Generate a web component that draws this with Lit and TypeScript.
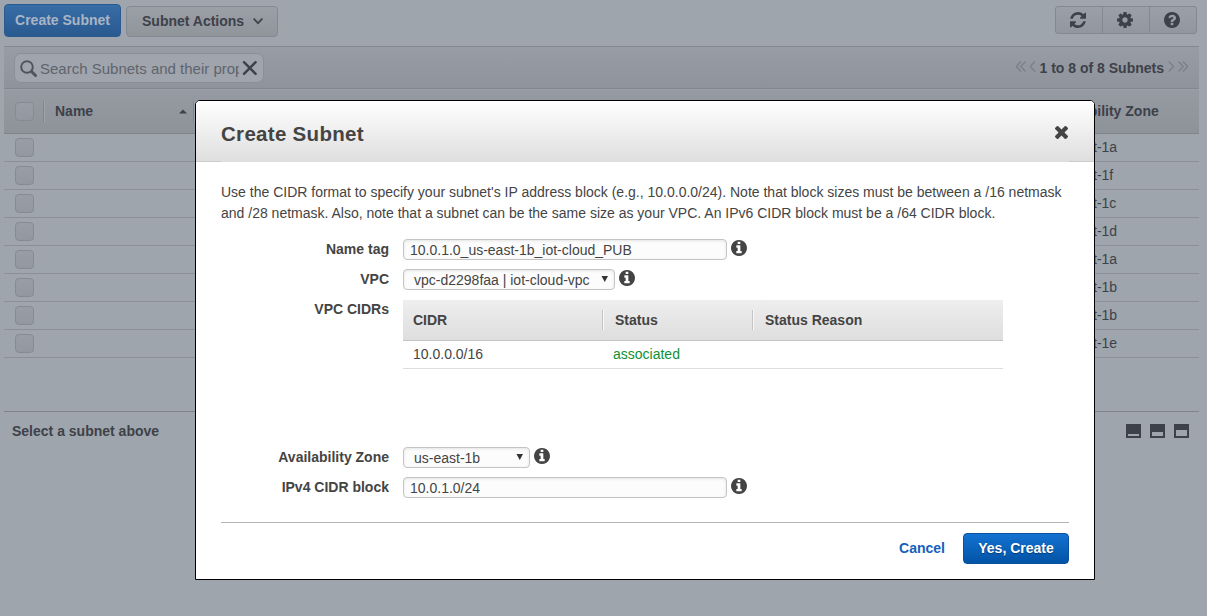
import { LitElement, html, css, svg } from "lit";
import { customElement } from "lit/decorators.js";

const ICONS: Record<string, { box: string; d: string }> = {
  refresh: {
    box: "128 128 1536 1536",
    d: "M1639 1056q0 5-1 7-64 268-268 434.5t-478 166.5q-146 0-282.5-55t-243.5-157l-129 129q-19 19-45 19t-45-19-19-45v-448q0-26 19-45t45-19h448q26 0 45 19t19 45-19 45l-137 137q71 66 161 102t187 36q134 0 250-65t186-179q11-17 53-117 8-23 30-23h192q13 0 22.5 9.5t9.5 22.5zm25-800v448q0 26-19 45t-45 19h-448q-26 0-45-19t-19-45 19-45l138-138q-148-137-349-137-134 0-250 65t-186 179q-11 17-53 117-8 23-30 23h-199q-13 0-22.5-9.5t-9.5-22.5v-7q65-268 270-434.5t480-166.5q146 0 284 55.5t245 156.5l130-129q19-19 45-19t45 19 19 45z",
  },
  cog: {
    box: "128 128 1536 1536",
    d: "M1152 896q0-106-75-181t-181-75-181 75-75 181 75 181 181 75 181-75 75-181zm512-109v222q0 12-8 23t-20 13l-185 28q-19 54-39 91 35 50 107 138 10 12 10 25t-9 23q-27 37-99 108t-94 71q-12 0-26-9l-138-108q-44 23-91 38-16 136-29 186-7 28-36 28h-222q-14 0-24.5-8.5t-11.5-21.5l-28-184q-49-16-90-37l-141 107q-10 9-25 9-14 0-25-11-126-114-165-168-7-10-7-23 0-12 8-23 15-21 51-66.5t54-70.5q-27-50-41-99l-183-27q-13-2-21-12.5t-8-23.5v-222q0-12 8-23t19-13l186-28q14-46 39-92-40-57-107-138-10-12-10-24 0-10 9-23 26-36 98.5-107.5t94.5-71.5q13 0 26 10l138 107q44-23 91-38 16-136 29-186 7-28 36-28h222q14 0 24.5 8.5t11.5 21.5l28 184q49 16 90 37l142-107q9-9 24-9 13 0 25 10 129 119 165 170 7 8 7 22 0 12-8 23-15 21-51 66.5t-54 70.5q26 50 41 98l183 28q13 2 21 12.5t8 23.5z",
  },
  help: {
    box: "128 128 1536 1536",
    d: "M1024 1376v-192q0-14-9-23t-23-9h-192q-14 0-23 9t-9 23v192q0 14 9 23t23 9h192q14 0 23-9t9-23zm256-672q0-88-55.5-163t-138.5-116-170-41q-243 0-371 213-15 24 8 42l132 100q7 6 19 6 16 0 25-12 53-68 86-92 34-24 86-24 48 0 85.5 26t37.5 59q0 38-20 61t-68 45q-63 28-115.5 86.5t-52.5 125.5v36q0 14 9 23t23 9h192q14 0 23-9t9-23q0-19 21.5-49.5t54.5-49.5q32-18 49-28.5t46-35 44.5-48 28-60.5 12.5-81zm384 192q0 209-103 385.5t-279.5 279.5-385.5 103-385.5-103-279.5-279.5-103-385.5 103-385.5 279.5-279.5 385.5-103 385.5 103 279.5 279.5 103 385.5z",
  },
  info: {
    box: "128 128 1536 1536",
    d: "M1152 1376v-160q0-14-9-23t-23-9h-96v-512q0-14-9-23t-23-9h-320q-14 0-23 9t-9 23v160q0 14 9 23t23 9h96v320h-96q-14 0-23 9t-9 23v160q0 14 9 23t23 9h448q14 0 23-9t9-23zm-128-896v-160q0-14-9-23t-23-9h-192q-14 0-23 9t-9 23v160q0 14 9 23t23 9h192q14 0 23-9t9-23zm640 416q0 209-103 385.5t-279.5 279.5-385.5 103-385.5-103-279.5-279.5-103-385.5 103-385.5 279.5-279.5 385.5-103 385.5 103 279.5 279.5 103 385.5z",
  },
  close: {
    box: "302 366 1188 1188",
    d: "M1490 1322q0 40-28 68l-136 136q-28 28-68 28t-68-28l-294-294-294 294q-28 28-68 28t-68-28l-136-136q-28-28-28-68t28-68l294-294-294-294q-28-28-28-68t28-68l136-136q28-28 68-28t68 28l294 294 294-294q28-28 68-28t68 28l136 136q28 28 28 68t-28 68l-294 294 294 294q28 28 28 68z",
  },
};

const icon = (name: string, size = 16) => html`<svg
  width=${size} height=${size} viewBox=${ICONS[name].box} fill="currentColor"
>${svg`<path d=${ICONS[name].d}></path>`}</svg>`;

const ZONES = ["a", "f", "c", "d", "a", "b", "b", "e"];

@customElement("subnet-list")
export class SubnetList extends LitElement {
  static styles = css`
    :host { display: block; color: #3d4149; }
    * { box-sizing: border-box; }
    svg { display: block; flex: none; }
    .toolbar { display: flex; align-items: flex-start; height: 46px; padding: 4px 10px 0 4px; font-weight: bold; }
    .create, .actions { display: flex; align-items: center; border-radius: 4px; padding-bottom: 2px; }
    .create { width: 117px; height: 33px; justify-content: center; color: #a9b5c5; border: 1px solid #295a90;
      background: linear-gradient(#376da6, #295a90); }
    .actions { width: 152px; height: 31px; margin: 2px 0 0 5px; padding: 0 14px 2px 15px; justify-content: space-between;
      border: 1px solid #848991; background: linear-gradient(#9ba0a8, #90949b); }
    .tools { display: flex; width: 142px; height: 28px; margin: 2px 0 0 auto; border: 1px solid #848991;
      border-radius: 3px; background: linear-gradient(#9ba0a8, #92969e); }
    .tool { flex: 1; display: flex; align-items: center; justify-content: center; padding-right: 2px; }
    .tool + .tool { border-left: 1px solid #848991; }
    .list { margin: 0 8px 0 4px; }
    .filter { display: flex; align-items: center; height: 43px; padding: 0 10px; border-top: 1px solid #848991;
      border-bottom: 1px solid #82868e; background: linear-gradient(#989ca4, #8f939b); }
    .search { display: flex; align-items: center; width: 250px; height: 30px; margin-top: 1px; padding: 0 6px 0 5px;
      border: 1px solid #8b9097; border-radius: 7px; background: #a0a5ad; }
    .query { flex: 1; margin-left: 3px; padding-top: 2px; overflow: hidden; white-space: nowrap; font-size: 15px;
      color: #5e646c; }
    .pager { display: flex; align-items: center; margin-left: auto; font-weight: bold; color: #3d4149; }
    .arrow { color: #7b8088; margin-top: -2px; }
    .count { margin: 0 4px; white-space: nowrap; }
    .head { display: flex; align-items: center; height: 45px; border-top: 1px solid #9ca0a8;
      border-bottom: 1px solid #7f838b; background: linear-gradient(#969aa2, #8e9299); font-weight: bold; }
    .row { display: flex; align-items: center; height: 28px; border-bottom: 1px solid #8b8f97; }
    .check { width: 19px; height: 19px; margin-left: 11px; flex: none; border: 1px solid #868a93; border-radius: 4px;
      background: linear-gradient(#999da6, #9397a0); }
    .sep { width: 2px; height: 21px; border-left: 1px solid #80858c; border-right: 1px solid #9fa3aa; }
    .head .check + .sep { margin-left: 9px; }
    .name { width: 148px; padding: 0 0 1px 10px; display: flex; align-items: center; justify-content: space-between; }
    .name svg { margin-right: 6px; }
    .zone { margin-left: auto; padding-bottom: 2px; width: 151px; white-space: nowrap; }
    .row .zone { width: 148px; }
    .rest { height: 53px; }
    .foot { display: flex; align-items: center; justify-content: space-between; height: 40px; padding: 0 10px 2px 8px;
      border-top: 1px solid #7f838b; font-weight: bold; }
    .panes { display: flex; gap: 9px; }
  `;
  render() {
    return html`
      <div class="toolbar">
        <div class="create">Create Subnet</div>
        <div class="actions">Subnet Actions
          <svg width="10" height="8" viewBox="0 0 10 8" fill="none" stroke="currentColor">
            <path d="M0.7 1.5L5 6 9.3 1.5" stroke-width="2"></path>
            <path d="M1.5 1L5 4.6 8.5 1" stroke="#92969e" stroke-width="0.7"></path>
          </svg>
        </div>
        <div class="tools">
          <div class="tool">${icon("refresh")}</div>
          <div class="tool">${icon("cog")}</div>
          <div class="tool">${icon("help")}</div>
        </div>
      </div>
      <div class="list">
        <div class="filter">
          <div class="search">
            <svg width="17" height="17" viewBox="0 0 17 17" fill="none" stroke="#50555d">
              <circle cx="7" cy="7" r="5.8" stroke-width="2"></circle>
              <path d="M11.5 11.5L15.5 15.5" stroke-width="3" stroke-linecap="round"></path>
            </svg>
            <span class="query">Search Subnets and their properties</span>
            <svg width="18" height="14" viewBox="0 0 18 14" stroke="#3d4149" stroke-width="2.4" stroke-linecap="round">
              <path d="M5 1.2L16.6 12.8M16.6 1.2L5 12.8"></path>
            </svg>
          </div>
          <div class="pager">
            <svg class="arrow" width="20" height="11" viewBox="0 0 20 11" fill="none" stroke="currentColor" stroke-width="1.3">
              <path d="M5 0.5L0.3 5.5 5 10.5M9.5 0.5L4.8 5.5 9.5 10.5M19 0.5L14.3 5.5 19 10.5"></path>
            </svg>
            <span class="count">1 to 8 of 8 Subnets</span>
            <svg class="arrow" width="21" height="11" viewBox="0 0 21 11" fill="none" stroke="currentColor" stroke-width="1.3">
              <path d="M0.8 0.5L5.5 5.5 0.8 10.5M10.5 0.5L15.2 5.5 10.5 10.5M15 0.5L19.7 5.5 15 10.5"></path>
            </svg>
          </div>
        </div>
        <div class="head">
          <div class="check"></div>
          <div class="sep"></div>
          <div class="name">Name
            <svg width="8" height="5" viewBox="0 0 8 5" fill="currentColor"><path d="M0 4.5L4 0.5 8 4.5z"></path></svg>
          </div>
          <div class="sep"></div>
          <div class="zone">Availability Zone</div>
        </div>
        ${ZONES.map((z) => html`<div class="row"><div class="check"></div><div class="zone">us-east-1${z}</div></div>`)}
        <div class="rest"></div>
        <div class="foot">
          <span>Select a subnet above</span>
          <div class="panes">
            ${[10, 8, 6].map((y) => html`<svg width="15" height="14" viewBox="0 0 15 14">
              <path fill="currentColor" fill-rule="evenodd" d="M0 0H15V14H0zM2 ${y}V12H13V${y}z"></path>
            </svg>`)}
          </div>
        </div>
      </div>
    `;
  }
}

@customElement("create-subnet-dialog")
export class CreateSubnetDialog extends LitElement {
  static styles = css`
    :host { display: block; box-sizing: border-box; width: 900px; height: 480px; border: 1px solid #000;
      border-radius: 5px 5px 0 0; background: #fff; color: #444; overflow: hidden; }
    * { box-sizing: border-box; }
    svg { display: block; flex: none; }
    .title { display: flex; align-items: center; justify-content: space-between; height: 61px; padding: 5px 26px 0 25px;
      background: linear-gradient(#ccc, #ccc) 0 100% / 25px 1px no-repeat,
        linear-gradient(#ccc, #ccc) 100% 100% / 25px 1px no-repeat, linear-gradient(#fff, #dedede); }
    .title svg { margin-top: -4px; }
    .heading { font-size: 20.5px; font-weight: bold; letter-spacing: 0.3px; }
    .body { padding: 20px 25px 0; }
    .intro { margin: 0; line-height: 21px; white-space: nowrap; }
    .field { display: flex; align-items: center; height: 21px; margin-top: 9px; }
    .first { margin-top: 15px; }
    .label { width: 168px; margin-right: 14px; padding-bottom: 2px; text-align: right; font-weight: bold; flex: none; }
    .input, .select { display: flex; align-items: center; height: 21px; padding: 1px 7px 0 6px; border: 1px solid #c4c4c4;
      border-radius: 4px; background: #fcfcfc; box-shadow: inset 0 1px 3px #e4e4e4; white-space: nowrap; }
    .input { width: 324px; }
    .select { width: 212px; padding: 1px 5px 0 10px; justify-content: space-between; }
    .select svg { margin-top: -3px; }
    .zone { width: 127px; }
    .info { margin: -4px 0 0 4px; }
    .cidrs { display: flex; align-items: flex-start; height: 139px; margin-top: 9px; }
    .cidrs .label { line-height: 20px; }
    .table { width: 600px; margin-top: 1px; }
    .row { display: grid; grid-template-columns: 200px 150px 250px; align-items: center; height: 28px;
      padding-bottom: 1px; border-bottom: 1px solid #ddd; }
    .row > * { padding-left: 10px; }
    .thead { height: 41px; padding: 0; border-bottom: 1px solid #c4c4c4; background: linear-gradient(#eee, #dedede);
      font-weight: bold; }
    .thead > * + * { height: 20px; line-height: 20px; margin-left: -1px; border-left: 1px solid #c4c4c4;
      box-shadow: inset 1px 0 #f8f8f8; padding-left: 12px; }
    .thead > *:first-child { line-height: 20px; }
    .ok { color: #0f9136; }
    .actions { display: flex; align-items: center; justify-content: flex-end; gap: 18px; margin-top: 24px;
      padding-top: 10px; border-top: 1px solid #b5b5b5; font-weight: bold; }
    .cancel { color: #1560bd; padding-bottom: 2px; }
    .submit { display: flex; align-items: center; justify-content: center; width: 106px; height: 31px; color: #fff;
      padding-bottom: 2px; border: 1px solid #0a52a0; border-radius: 4px;
      background: linear-gradient(#1472d2, #0253a5); text-shadow: 0 1px 1px #033c78; }
  `;
  private caret() {
    return html`<svg width="8" height="6" viewBox="0 0 8 6" fill="#333"><path d="M0.5 0H7L3.75 6z"></path></svg>`;
  }
  private info() {
    return html`<div class="info">${icon("info")}</div>`;
  }
  render() {
    return html`
      <div class="title"><span class="heading">Create Subnet</span>${icon("close", 13)}</div>
      <div class="body">
        <p class="intro">Use the CIDR format to specify your subnet's IP address block (e.g., 10.0.0.0/24). Note that block sizes must be between a /16 netmask<br>and /28 netmask. Also, note that a subnet can be the same size as your VPC. An IPv6 CIDR block must be a /64 CIDR block.</p>
        <div class="field first"><div class="label">Name tag</div><div class="input">10.0.1.0_us-east-1b_iot-cloud_PUB</div>${this.info()}</div>
        <div class="field"><div class="label">VPC</div><div class="select">vpc-d2298faa | iot-cloud-vpc ${this.caret()}</div>${this.info()}</div>
        <div class="cidrs">
          <div class="label">VPC CIDRs</div>
          <div class="table">
            <div class="row thead"><span>CIDR</span><span>Status</span><span>Status Reason</span></div>
            <div class="row"><span>10.0.0.0/16</span><span class="ok">associated</span><span></span></div>
          </div>
        </div>
        <div class="field"><div class="label">Availability Zone</div><div class="select zone">us-east-1b ${this.caret()}</div>${this.info()}</div>
        <div class="field"><div class="label">IPv4 CIDR block</div><div class="input">10.0.1.0/24</div>${this.info()}</div>
        <div class="actions"><span class="cancel">Cancel</span><span class="submit">Yes, Create</span></div>
      </div>
    `;
  }
}

@customElement("app-root")
export class AppRoot extends LitElement {
  static styles = css`
    :host { display: block; position: relative; height: 616px; overflow: hidden; background: #9fa5ac;
      font: 14px/18px "Liberation Sans", Arial, sans-serif; }
    .dialog { position: absolute; left: 195px; top: 100px; }
  `;
  render() {
    return html`<subnet-list></subnet-list><create-subnet-dialog class="dialog"></create-subnet-dialog>`;
  }
}
